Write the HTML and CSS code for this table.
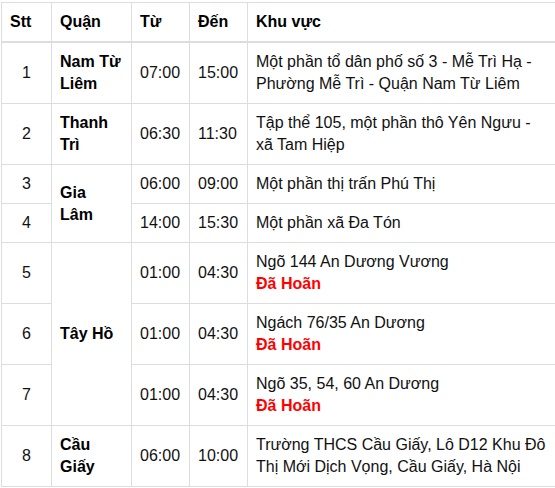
FILE: index.html
```html
<!DOCTYPE html>
<html lang="vi">
<head>
<meta charset="utf-8">
<link rel="stylesheet" href="styles.css">
</head>
<body>
<div class="wrap">
<table class="schedule">
  <colgroup>
    <col class="c-stt">
    <col class="c-quan">
    <col class="c-tu">
    <col class="c-den">
    <col class="c-khu">
  </colgroup>
  <thead>
    <tr>
      <th>Stt</th>
      <th>Quận</th>
      <th>Từ</th>
      <th>Đến</th>
      <th>Khu vực</th>
    </tr>
  </thead>
  <tbody>
    <tr>
      <td class="num">1</td>
      <td class="dist">Nam Từ Liêm</td>
      <td>07:00</td>
      <td>15:00</td>
      <td>Một phần tổ dân phố số 3 - Mễ Trì Hạ -<br>Phường Mễ Trì - Quận Nam Từ Liêm</td>
    </tr>
    <tr>
      <td class="num">2</td>
      <td class="dist">Thanh Trì</td>
      <td>06:30</td>
      <td>11:30</td>
      <td>Tập thể 105, một phần thô Yên Ngưu - xã Tam Hiệp</td>
    </tr>
    <tr>
      <td class="num">3</td>
      <td class="dist" rowspan="2">Gia Lâm</td>
      <td>06:00</td>
      <td>09:00</td>
      <td>Một phần thị trấn Phú Thị</td>
    </tr>
    <tr>
      <td class="num">4</td>
      <td>14:00</td>
      <td>15:30</td>
      <td>Một phần xã Đa Tón</td>
    </tr>
    <tr>
      <td class="num">5</td>
      <td class="dist" rowspan="3">Tây Hồ</td>
      <td>01:00</td>
      <td>04:30</td>
      <td>Ngõ 144 An Dương Vương<br><strong class="delay">Đã Hoãn</strong></td>
    </tr>
    <tr>
      <td class="num">6</td>
      <td>01:00</td>
      <td>04:30</td>
      <td>Ngách 76/35 An Dương<br><strong class="delay">Đã Hoãn</strong></td>
    </tr>
    <tr>
      <td class="num">7</td>
      <td>01:00</td>
      <td>04:30</td>
      <td>Ngõ 35, 54, 60 An Dương<br><strong class="delay">Đã Hoãn</strong></td>
    </tr>
    <tr>
      <td class="num">8</td>
      <td class="dist">Cầu Giấy</td>
      <td>06:00</td>
      <td>10:00</td>
      <td>Trường THCS Cầu Giấy, Lô D12 Khu Đô Thị Mới Dịch Vọng, Cầu Giấy, Hà Nội</td>
    </tr>
  </tbody>
</table>
</div>
</body>
</html>
```

FILE: styles.css
```css
html, body {
  margin: 0;
  padding: 0;
  background: #fff;
}

.wrap {
  padding: 2px 0 0 1px;
  overflow: hidden;
}

.schedule {
  border-collapse: collapse;
  table-layout: fixed;
  width: 557px;
  border: 1px solid #ddd;
  font-family: "Liberation Sans", Arial, sans-serif;
  font-size: 16px;
  line-height: 22px;
  color: #111;
}

.c-stt { width: 50px; }
.c-quan { width: 80px; }
.c-tu { width: 58px; }
.c-den { width: 58px; }
.c-khu { width: 311px; }

.schedule th,
.schedule td {
  padding: 8px;
  border: 1px solid #ddd;
  vertical-align: middle;
  text-align: left;
}

.schedule th {
  font-weight: bold;
  border-bottom: 2px solid #ddd;
  color: #000;
}

.schedule td.num {
  text-align: center;
}

.schedule td.dist {
  font-weight: bold;
  color: #000;
}

.delay {
  color: #ff0000;
  font-weight: bold;
}
```
